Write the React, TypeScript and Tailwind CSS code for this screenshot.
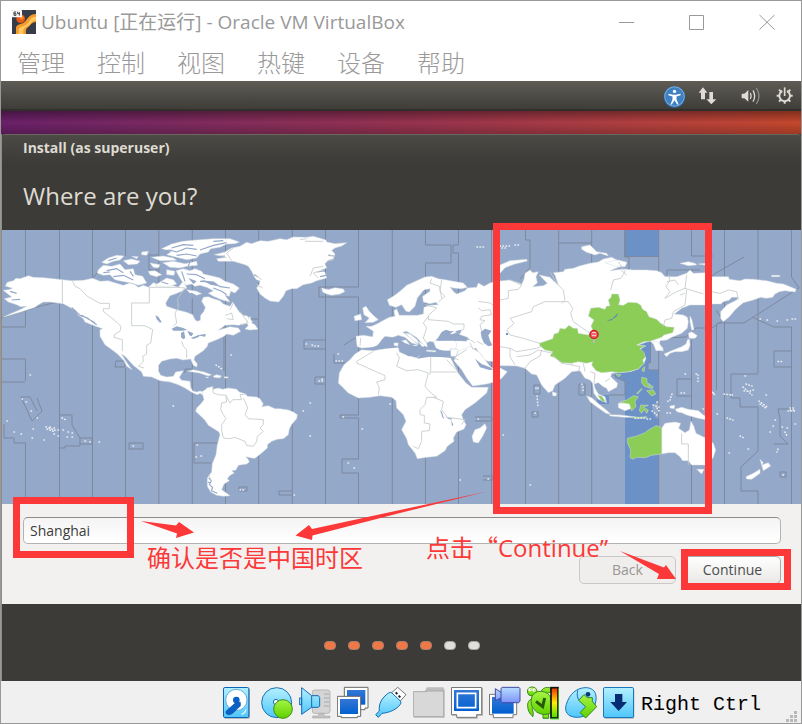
import React from "react";

const uiFont = "font-['Open_Sans','Noto_Sans_CJK_SC',sans-serif]";
const menuFont = "font-['Noto_Sans_CJK_SC',sans-serif]";

const zoneLines = [
  "M25.5 230V327M25.5 327H2M2 359H25.5V381M2 382H25M25.5 443V504M25.5 443H14V438H4V424",
  "M59.5 230V504M92.5 230V278M92.5 290V504M125.5 230V256M125.5 368V504",
  "M158.8 230V504M192.3 230V504M225.5 230V504M258.7 230V504M292.3 230V504M325.5 230V504",
  "M358.5 230V287H319V297H358.5V415H340V418H358.5V459H342V473H358.5V504",
  "M325.5 340H304V349H325.5M325.5 377H315V384H325.5M292 491H279V495H292",
  "M392.3 230V504M425.5 230V245H451V263H425.5V504M458.5 230V245H453V253H458.5V504M491.5 230V504",
  "M525.5 230V240H530V268L520 279M525.5 330V504M558.7 230V504M591.7 230V243H558.7M591.7 243V504",
  "M624.7 230V257H629V270M658.7 230V256M691.5 230V256H713M667 275V270H700M658.7 256V504M691.5 340V504M677 379H691.5M677 379V396H691.5",
  "M724.5 230V504M716.5 324V390M758 230V373M731 374H758M731 374V398H740V407H758V451L741 467V491H758V504",
  "M791.5 230V277L799 288L744 323H717M791.5 327V504M774 327L752 317M791.5 327H774M774 351H791.5M774 351V367H791.5M667 338L686 337L696 328H712L722 321",
  "M2 318C30 309 42 305 59 302M37 398L42 411L32 421L21 397V397H30L37 411M60 415H72V425L80 438V446H65V448H60M80 438H92V444H80",
  "M158.8 255H149V270H158M115 367H125V361H116ZM129 443H143V449H129ZM194 443H219M194 443V463H211M239 487H247V491H239ZM224 371V319H258M185 369H192M185 369V373M102 267L92 279M344 345L358 336M334 354V363H345",
  "M475 417H492V421H475M483 476H493V480H483M534 385H540V394H534ZM579 384H585V395H579ZM532 412H538V417H532ZM609 395H625V381L613 375",
  "M774 444H788L780 436V419L778 409H792M702 284L716 273L744 257M716 310L723 321M780 472H786V477H780Z",
];

const origins = { a: [0, 228], b: [180, 228], c: [330, 228], d: [490, 220], e: [620, 220] };
type Region = keyof typeof origins;

function place(at: Region) {
  return `translate(${origins[at][0]} ${origins[at][1]}) scale(0.33333)`;
}

function Land({ d, at, fill = "#ffffff" }: { d: string; at: Region; fill?: string }) {
  return <path d={d} transform={place(at)} fill={fill} stroke="#d5dde0" strokeWidth="1.5" strokeLinejoin="round" />;
}

function Borders({ d, at }: { d: string; at: Region }) {
  return <path d={d} transform={place(at)} fill="none" stroke="#c3cac9" strokeWidth="2.5" strokeLinejoin="round" />;
}

const sea = "#94a8c9";
const zone = "#6c91c7";
const green = "#8ccd58";

function Inlets({ d, at }: { d: string; at: Region }) {
  return <path d={d} transform={place(at)} fill="none" stroke={sea} strokeWidth="3.5" strokeLinejoin="round" />;
}

function WorldMap() {
  return (
    <svg viewBox="2 230 799 274" className="block w-full" role="img" aria-label="Time zone map">
      <rect x="2" y="230" width="799" height="274" fill={sea} />
      <rect x="625" y="230" width="34" height="26.5" fill={zone} />
      <path d="M650.5 342V363H648V370H658.7V400L652 407L655 417L658.7 419V504H625V382L615 378V372L625 345ZM597 395H609V404H597Z" fill={zone} />
      <g fill="none" stroke="#7d899e" strokeWidth="1">
        {zoneLines.map((d) => (
          <path key={d} d={d} />
        ))}
        <path d="M625 230V256.500H658.500M650.500 342V363H648V370H658.700" />
      </g>

      {/* North and Central America */}
      <Land at="a" d="M10 187L25 185L38 181L16 174L22 163L40 158L48 151L60 152L85 143L100 148L130 149L160 152L187 155L215 158L250 157L278 151L300 160L325 158L340 163L370 172L390 165L405 170L415 178L430 172L445 178L460 164L480 172L510 170L535 178L545 165L550 158L560 180L545 190L525 198L510 203L497 225L500 235L530 245L560 253L578 260L585 275L592 280L601 277L602 262L612 250L616 238L605 220L610 208L625 206L640 212L660 218L670 228L690 235L698 222L710 240L718 252L730 262L742 264L752 275L758 282L738 287L715 292L700 290L675 292L655 307L690 296L715 300L722 310L700 322L680 318L672 325L650 335L625 345L622 355L610 368L585 385L582 395L592 408L590 417L580 412L572 393L550 396L530 391L510 393L485 400L476 412L476 430L482 442L500 447L520 445L527 432L550 428L538 448L545 457L570 460L572 478L578 489L590 492L600 489L612 493L620 480L640 476L630 500L610 502L600 496L592 500L575 493L555 480L535 470L510 462L480 458L455 447L430 445L425 432L400 412L375 385L364 378L378 400L396 425L380 415L372 398L355 380L345 372L315 350L300 325L300 305L308 302L275 290L255 282L250 272L235 262L228 248L213 240L190 227L150 222L130 222L115 230L105 238L80 246L62 252L10 268L30 258L60 245L80 235L62 236L50 230L25 222L13 212L35 207L20 195Z" />
      <Land at="a" d="M738 285L750 265L755 285L765 290L774 304L750 306L735 303L745 292ZM295 125L310 112L335 115L360 108L375 125L400 122L405 140L428 145L440 165L415 172L395 165L365 160L345 155L330 140L310 142L292 135ZM305 103L325 90L350 82L372 84L360 96L340 100L320 108ZM370 98L395 93L420 100L412 108L385 110ZM425 72L445 70L440 82L425 80ZM395 85L415 86L410 92ZM450 105L480 110L475 120L460 118ZM445 130L465 128L485 140L470 146L450 140ZM488 104L520 100L555 107L590 100L592 112L560 115L540 120L510 118ZM500 125L525 130L522 142L500 140ZM455 88L490 84L520 90L530 97L480 98ZM485 62L515 48L548 40L590 36L640 32L690 32L718 42L705 47L680 48L660 58L632 62L625 72L600 78L590 90L560 95L530 88L500 80L515 70ZM528 128L550 122L570 128L585 122L605 130L610 138L640 145L660 150L675 160L700 168L718 180L705 195L692 190L688 205L675 202L690 222L665 215L640 205L625 196L640 188L620 178L600 172L585 175L575 168L558 172L545 158L535 142ZM560 185L590 190L605 197L585 203L570 196ZM465 172L500 150L520 155L530 168L500 178Z" />
      <Inlets at="a" d="M485 70L510 66L530 72L560 60L590 64M515 60L550 50L580 52M530 82L560 78L590 84M600 66L640 52L680 44M640 40L670 38M320 128L350 122L370 134M340 146L370 142L400 156M390 130L400 145M310 134L330 132M325 98L350 90M560 138L590 140L615 152M600 160L640 162L660 176L690 180M640 180L665 190L680 200M545 130L555 160M570 100L565 115M485 162L505 168M30 190L50 196M35 216L60 214M215 238L240 262L262 270L290 290M245 262L285 284" />
      <Borders at="a" d="M187 155V225M218 160L225 175L240 182L262 205L300 226H328V242H310V250L345 278L363 295L360 310L345 318L342 328L367 335V370M448 178V225H395V293H435L458 305L452 345L440 352V378L428 385L430 400L415 415L432 420M530 178L555 180L533 212L535 240L525 255L530 285L520 295M545 340L550 355L560 365V390M675 262L695 255L700 275L680 272M700 225L690 245M720 250L745 285L720 290M448 178H530" />
      <path
        fill={sea}
        transform={place("a")}
        d="M466 262L475 266L485 282L480 284L470 274ZM515 302L530 295L550 300L562 306L545 308L520 308ZM543 315L552 310L556 330L550 334L543 328ZM562 308L580 316L575 325L568 322ZM572 330L595 322L598 326L580 333ZM590 322L618 318L615 326ZM560 200L575 194L590 202L575 212ZM602 155L640 162L655 175L632 170ZM565 150L590 160L580 168Z"
      />
      <Land at="a" d="M563 430L580 425L612 432L635 440L625 444L598 435ZM640 444L650 440L665 444L658 450L642 448ZM616 448L625 447L624 450ZM673 446L685 447L684 450L673 450Z" />

      {/* Greenland, Iceland */}
      <Land at="b" d="M103 80L135 72L155 60L180 55L200 43L215 47L240 38L265 40L300 32L320 35L340 27L380 28L400 25L438 36L440 42L465 47L500 44L485 54L465 60L455 67L465 78L460 92L445 97L435 107L440 120L425 125L435 133L440 150L410 158L395 165L370 170L350 182L335 182L318 188L310 205L296 222L270 219L255 210L240 198L230 180L240 165L225 150L215 130L205 115L195 110L160 100L115 100L110 92L140 88L120 84ZM425 180L445 185L465 179L490 183L494 191L480 198L455 202L440 198L428 192Z" />
      <Inlets at="b" d="M445 82L462 84M442 104L460 98M412 132L435 128M420 146L438 142M222 140L234 146M228 158L240 160M105 86L135 84" />
      <Borders at="b" d="M160 60L140 75L155 98M375 40H430M360 35L380 32M390 145L400 120L430 115M415 150L400 135L435 125M445 80L465 85M440 100L462 95M225 140L245 155M230 170L248 180" />
      {/* South America */}
      <Land at="b" d="M68 490L82 482L95 476L100 484L115 480L128 484L145 480L170 484L178 492L195 497L203 505L230 507L240 512L250 528L245 536L265 533L285 542L300 542L325 546L340 552L352 560L350 572L336 588L328 602L325 620L310 632L292 634L275 640L262 650L262 660L245 675L225 691L215 690L198 686L205 695L208 702L200 708L175 712L168 726L155 728L163 735L150 742L142 752L148 758L132 768L125 785L138 794L150 803L130 805L110 802L92 792L82 775L82 750L95 732L97 707L108 680L112 650L120 620L117 612L85 592L75 577L58 560L47 550L50 540L62 528L72 515L68 500Z" />
      <Inlets at="b" d="M86 750L94 758L88 770L98 778L94 788L112 796M84 762L92 766" />
      <Borders at="b" d="M98 482L100 495L115 500L138 502L140 522L125 525L122 545L130 560L138 572L125 590V608L130 630L150 632L165 628L195 640L200 652L220 655L230 640L232 625L250 610L240 600L250 590V575L205 572L195 560L203 540L195 520L190 510M138 502L150 525L158 515L185 515L180 500L200 498M85 740L95 760" />

      {/* Europe and Africa */}
      <Land at="c" d="M78 325L100 322L128 326L130 310L108 295L125 295L145 286L155 280L178 268L195 265L192 248L200 243L208 262L235 262L262 262L280 258L282 238L300 232L325 230L318 223L300 227L280 222L278 205L300 190L300 182L282 185L262 210L255 235L238 252L228 250L215 230L198 238L178 232L172 215L190 205L210 190L230 172L260 158L285 147L305 145L325 152L345 155L370 160L400 165L412 178L395 182L370 180L360 177L372 192L380 198L405 188L412 180L440 178L445 165L462 175L480 165L500 160V400H475L462 395L455 380L445 372L438 360L420 365L408 378L385 372L378 362L355 368L325 363L318 350L325 340L355 340L378 338L410 340L412 328L385 318L392 308L375 315L362 320L350 308L340 312L330 325L318 335L322 345L300 340L290 345L292 358L280 352L262 330L230 310L218 312L240 330L265 350L245 345L225 328L205 322L188 328L165 325L155 335L148 350L128 358L95 360L82 356L80 345Z" />
      <Land at="c" d="M98 240L108 235L118 250L130 262L145 275L130 283L105 284L118 270L102 260ZM72 265L92 258L95 275L75 278ZM310 340L325 338L370 335L380 345L378 362L340 370L318 360ZM262 338L285 352L278 358ZM248 352L262 350L258 358ZM362 360L385 365L378 385L362 385ZM385 370L420 355L450 375L465 395L480 415L500 430V460L470 468L428 474L410 450L395 425L372 398Z" />
      <Land at="c" d="M75 378L95 365L130 368L165 362L205 358L208 372L230 382L262 390L270 380L300 386L330 386L362 390L372 410L388 440L408 465L425 478L475 478L470 495L435 525L405 545L395 560L400 575L408 590L402 603L380 612L370 630L372 640L352 655L345 668L320 685L290 688L262 692L255 675L235 650L230 632L215 605L220 595L228 580L220 560L200 540L198 518L185 508L150 503L120 508L85 510L55 495L38 478L25 465L28 435L42 410L60 395ZM465 587L470 600L458 625L445 645L430 642L426 625L435 605L450 600Z" />
      <path
        transform={place("c")}
        fill={sea}
        d="M325 328L335 312L348 305L362 310L372 308L360 318L380 322L410 328L418 335L385 338L350 338L325 338ZM375 310L395 305L390 318ZM452 312L465 302L485 308L475 322L480 338L488 352L475 355L462 345L455 330ZM435 392L455 408L480 418L490 425L478 426L450 418ZM330 545L338 570L342 572L336 552ZM345 568L368 572L362 575ZM363 575L370 590L366 595ZM92 366L130 364L205 358L235 385L270 380L262 392L300 386L362 388L360 370L320 365L290 358L240 352L190 330L155 337L140 355Z"
      />
      <Land at="c" d="M225 315L242 332L265 348L262 335L240 318ZM215 338L228 336L240 350L225 345ZM192 345L205 345L203 355L192 352ZM290 366L318 368L316 372L290 370Z" />
      <Borders at="c" d="M80 400V405L165 443V455L140 462L148 480L145 500M80 400L130 370M200 375L208 390L200 415L230 428L265 425L295 435L285 475L300 492L320 508H290L285 530L270 545V560L283 562V585L300 588L298 608L275 610V640L265 662L250 655M302 388V432H385L350 395M300 432V440M310 508L340 520L335 545L352 568L405 575L395 590M305 153L300 165L328 175L335 210M335 155L330 190L345 205L325 222M285 230L320 240L295 262L295 275L355 280L370 288H402V302L390 312M295 265L280 285L290 300L280 330L290 345M445 220L480 225L500 240M445 240L455 248L480 245L485 260L455 265L450 275L465 278L450 290L455 310M410 328L435 345M440 340L460 350M92 330L90 355M420 345L430 365M385 395L370 390L410 365" />

      {/* Asia */}
      <Land at="d" d="M15 185L30 183L60 180L85 188L95 193L102 178L105 160L120 150L128 158L145 155L138 170L142 188L128 200L160 197L172 190L148 165L180 172L190 182L205 195L195 165L190 158L220 155L225 148L250 145L268 138L300 130L325 126L340 117L365 112L385 122L410 126L408 135L385 142L360 152L400 147L430 150L470 150L500 152L515 158L525 170L560 170L590 160L600 150L610 160L645 158L665 170L715 170L718 178L750 182L765 177L790 178L830 182L860 190L880 192L900 200L919 208L915 216L885 212L868 215L855 222L848 232L828 235L812 232L790 240L760 248L748 258L735 270L718 290L700 305L692 295L692 275L710 255L740 240L745 232L725 232L718 240L700 245L692 252L660 252L645 255L600 255L575 265L553 282L580 285L592 292L595 305L592 325L575 340L545 352L530 360L510 362L508 378L518 382L520 393L500 390L500 375L490 372L480 362L445 375L465 378L450 388L468 415L462 430L445 447L420 455L385 458L365 460L362 470L383 490L380 502L355 515L350 505L340 500L325 488L312 492L315 505L325 522L345 530L350 548L325 538L312 520L308 490L300 480L285 475L270 452L245 455L225 475L195 495L188 512L175 518L155 495L140 465L125 462L105 445L80 438L30 437L15 433ZM25 441L52 455L35 475L15 486ZM187 515L200 520L198 528L188 527ZM275 80L300 75L320 95L350 100L355 108L330 100L315 105L290 97L275 88ZM30 135L60 122L110 118L112 123L75 132L45 143L30 160L15 165ZM290 528L305 533L330 555L355 575L362 583L348 580L320 560L300 545ZM358 584L390 585L415 588L440 592L405 592L360 588ZM385 550L420 548L425 565L405 572L385 563Z" />
      <Land at="e" d="M180 130L205 125L225 130L230 135L205 137ZM235 132L262 130L260 136ZM455 166L480 166L478 170L455 170ZM-45 128L-5 120L20 128L15 140L-15 138ZM210 288L216 300L222 330L215 330L210 305ZM205 340L215 335L232 347L225 355L208 355ZM208 358L210 375L205 390L185 395L165 395L150 400L140 410L132 402L165 388L185 380L198 372L203 358ZM98 365L110 365L122 375L128 390L108 392ZM150 558L165 556L162 566L150 564ZM165 568L185 562L205 568L235 572L250 585L262 592L262 600L235 595L200 585L185 578L172 576ZM125 625L135 610L165 606L182 610L176 625L195 638L208 630L213 603L222 620L228 640L258 655L280 670L287 690L280 712L262 735L215 735L205 722L188 722L180 710L165 698L145 698L125 702ZM230 748L252 748L245 762ZM378 770L400 760L420 748L420 760L395 778L380 777ZM425 735L445 728L452 738L430 752ZM420 718L430 728L425 735Z" />
      <Land at="d" fill={green} d="M148 370L165 364L188 356L192 342L205 338L210 325L225 327L237 316L250 325L262 325L265 340L295 345L308 330L303 318L312 300L295 288L302 265L325 262L345 268L350 258L360 258L355 240L363 232L365 222L385 222L390 240L386 254L400 256L415 247L440 248L452 255L458 268L470 275L477 290L500 298L512 310L530 320L553 322L548 338L522 345L515 352L480 364L462 365L440 375L468 378L450 385L462 398L466 412L458 420L462 430L445 447L415 455L385 458L365 455L335 458L318 452L305 435L308 425L290 430L265 425L245 430L215 428L192 412L180 408L188 395L165 390L150 378ZM378 463L393 464L386 471ZM458 445L465 440L462 455L456 452ZM323 526L335 528L347 545L335 543ZM388 547L410 540L430 527L445 530L435 545L438 560L425 573L418 552ZM455 472L470 475L472 490L480 505L462 498L455 488ZM475 490L490 500L485 508ZM470 512L490 510L497 522L485 528ZM452 555L475 556L460 562L475 570L470 580L462 568L455 580L448 572ZM440 520L455 505L456 508L443 522ZM418 590L445 592L470 590L470 593L440 596Z" />
      <Land at="e" fill={green} d="M22 655L50 648L75 638L85 630L100 622L108 617L120 620L125 625V702L95 706L75 713L50 712L38 718L30 712L32 690L22 668Z" />
      <Borders at="d" d="M60 180L95 195L85 208L55 212V235L30 240M180 155L200 190L220 210L225 240L215 250M60 295L125 275L130 260L165 245L235 245L248 265L242 280L250 305L300 340M60 295L72 310L50 330L60 345L100 355L150 370M30 380L60 385L80 395L140 385L155 378M60 385V410L75 435M80 410L120 405L145 390L188 400M105 445L120 425L150 408L155 390M188 405L215 430L245 435L245 430M245 435L270 440L265 455M280 430L285 455M385 125L405 155L392 175L370 180L362 210M392 150L410 165M535 165L540 180L528 200L540 215L525 235L560 215L585 205L590 165M585 205L640 222M590 210L585 255L550 275L545 295L525 300L520 320M300 455L315 460L312 490M360 475L345 485" />
      <Borders at="e" d="M275 215L300 220L325 210L350 215L355 240M185 640V672H205V735M140 185L165 180L175 195M180 225L195 220" />
      <path d="M606.500 320.500L612 319L618 313L617 316L611 320.500Z" fill="#5f83bd" />
      <path d="M506 333h2v2h-2Z" fill={zone} />

      {/* Small islands */}
      <g fill="none" stroke="#eff2f2" strokeWidth="1.500" strokeLinecap="round" strokeDasharray="0.500 2.500">
        <path d="M22 399h0.500M26 402h0.500M31 411h0.500M37 418h0.500M7 421h1M14 432h0.500M21 434h0.500M32 438h0.500M44 440h0.500M30 375h0.500M33 429h1M46 427h0.500M50 427l2 2M54 428h2M58 430h2M54 434h0.500M58 436h0.500M63 430h1M68 432h1M67 437h0.500M72 437h1M72 433h0.500M62 418l4 2M85 441h1M90 442h0.500M99 442h0.500M133 446h0.500M173 406h0.500M231 355h0.500M197 445h1M196 457h0.500M201 456h0.500M240 490h6M294 495h0.500M49 428l8 3M47 429l8 3" />
        <path d="M306 344h0.500M312 345l3 1M318 346h0.500M338 354h0.500M336 361h7M319 381h6M322 379v3M303 411h0.500M310 403h0.500M310 436h1M343 417h0.500M362 429h0.500M348 463h0.500M354 468h0.500M460 480h0.500M478 419h0.500M488 479h0.500M503 435h0.500M390 404h0.500M216 365l6 4" />
        <path d="M477 247h8M500 246h10M502 248h4M515 245h4M536 388v3M538 388v2M537 396l1 11M583 387v6M582 384v2M535 413h1M530 485h1M635 418h10M647 419h6M668 401v0.500M672 394l-2 6M681 393h6M698 375v8M696 374h2M685 374h0.500M710 393h4M732 395h1M745 376h0.500M743 387l9 8M746 384l6 2M744 391h7M753 390h0.500M759 401l8 6M760 404l7 5M766 395h2M760 319h0.500M767 320h2M777 321h3M787 320h3M792 319h5M788 411h7M790 408h5M775 420h0.500M773 426h0.500M770 432h2M782 427h2M785 432l2 4M787 428h2M795 424h0.500M778 449l-1 3M729 453h0.500M748 449h0.500M740 436l4 2M717 414h1M727 418l6 2M703 409h2M667 413h4M657 402h2M657 408l2 3M790 410h4M783 475h1M712 392l3 3M724 394l8 1M653 405l6 2M652 411l5 4" />
        <path d="M778 361.500h4" />
      </g>
      <path d="M594 339V343" stroke="#b6bbb5" strokeWidth="2" />
      <circle cx="594" cy="334.500" r="4" fill="#ef6a6c" stroke="#cf2127" strokeWidth="1.500" />
      <path d="M592 332.500H596M592 335.500H596" stroke="#f9c4c4" strokeWidth="1" />
    </svg>
  );
}

function UbuntuIcon() {
  return (
    <svg viewBox="36 30 72 72" className="h-6 w-6">
      <rect x="36" y="30" width="72" height="72" fill="#363c48" />
      <path d="M48 102V86C48 74 58 74 68 70C82 64 82 42 108 42V66C92 68 92 76 84 82C76 88 78 94 78 102Z" fill="#f79a2c" />
      <path d="M56 102V88C60 78 80 80 88 64C92 54 98 50 108 50V60C94 62 92 76 80 80C68 85 70 92 70 102Z" fill="#ffc95e" />
      <circle cx="62" cy="56" r="13" fill="#ea5a12" />
      <circle cx="65" cy="53" r="6" fill="#ff8a2a" />
      <rect x="36" y="30" width="30" height="22" rx="2" fill="#f8f8f8" />
      <path d="M48 36H42V46H48V41H42M53 35V41H59M58 36V47" fill="none" stroke="#444" strokeWidth="3" />
    </svg>
  );
}

function TrayIcons() {
  return (
    <div className="flex h-full items-center pt-0.5 text-[#dfdbd2]">
      <svg viewBox="788 252 68 68" className="h-[23px] w-[23px]" role="img" aria-label="Accessibility">
        <circle cx="822" cy="288" r="32" fill="#2c5f93" />
        <circle cx="822" cy="286" r="29" fill="#3f80c0" stroke="#79abdc" strokeWidth="3" />
        <circle cx="822" cy="271" r="5" fill="#fff" />
        <path d="M804 278L818 281H826L840 278V282L828 286V295L834 310H830L822 297L814 310H810L816 295V286L804 282Z" fill="#fff" />
      </svg>
      <svg viewBox="896 260 60 60" className="ml-3 h-5 w-5" role="img" aria-label="Network" fill="currentColor">
        <path d="M898 280L911 264L924 280H917V300H905V280ZM921 300H930V278H941V300H951L936 315Z" />
      </svg>
      <svg viewBox="1024 260 60 60" className="ml-[23px] h-5 w-5" role="img" aria-label="Sound">
        <path d="M1026 283H1034L1046 272V307L1034 297H1026Z" fill="currentColor" />
        <path d="M1052 281Q1057 290 1052 299M1060 273Q1070 290 1060 307" fill="none" stroke="currentColor" strokeWidth="4" />
        <path d="M1070 266Q1086 290 1070 314" fill="none" stroke="#908e87" strokeWidth="4" />
      </svg>
      <svg viewBox="1126 260 60 60" className="ml-[14px] h-5 w-5" role="img" aria-label="Session" fill="none" stroke="currentColor">
        <path d="M1148 275A16 16 0 1 0 1162 275" strokeWidth="6" />
        <path d="M1155 264V290" strokeWidth="5" />
        <path d="M1131 289H1138M1172 289H1179M1138 271L1144 277M1172 271L1166 277M1138 307L1144 301M1172 307L1166 301M1155 305V313" strokeWidth="6" />
      </svg>
    </div>
  );
}

function StatusIcon({ box, label, children }: { box: string; label: string; children: React.ReactNode }) {
  return (
    <button type="button" aria-label={label} className="h-[34px] w-8 shrink-0">
      <svg viewBox={box} className="h-[34px] w-8">
        {children}
      </svg>
    </button>
  );
}

function StatusIcons() {
  return (
    <div className="flex gap-1.5">
      <svg className="absolute h-0 w-0" aria-hidden="true">
        <defs>
          <linearGradient id="aqua" x1="0" y1="0" x2="0" y2="1">
            <stop offset="0" stopColor="#b4f0ff" />
            <stop offset="1" stopColor="#4fc6fa" />
          </linearGradient>
          <linearGradient id="lime" x1="0" y1="0" x2="0" y2="1">
            <stop offset="0" stopColor="#a6f545" />
            <stop offset="1" stopColor="#5fd000" />
          </linearGradient>
          <linearGradient id="blue" x1="0" y1="0" x2="0" y2="1">
            <stop offset="0" stopColor="#3577d5" />
            <stop offset="1" stopColor="#0060cf" />
          </linearGradient>
          <linearGradient id="heat" x1="0" y1="0" x2="0" y2="1">
            <stop offset="0" stopColor="#f32d00" />
            <stop offset="0.500" stopColor="#ffee00" />
            <stop offset="1" stopColor="#43e000" />
          </linearGradient>
          <linearGradient id="violet" x1="0" y1="0" x2="0" y2="1">
            <stop offset="0" stopColor="#b8dcff" />
            <stop offset="1" stopColor="#7d93fa" />
          </linearGradient>
        </defs>
      </svg>
      <StatusIcon box="39 168 96 102" label="Hard disks">
        <rect x="42" y="175" width="78" height="91" rx="5" fill="#aaa" />
        <rect x="40.500" y="172.500" width="76" height="90" rx="4" fill="url(#aqua)" stroke="#0a64b8" strokeWidth="3" />
        <circle cx="79" cy="210" r="32" fill="#fff" stroke="#5eaede" strokeWidth="3" />
        <circle cx="79" cy="210" r="10" fill="#0a62c8" />
        <path d="M48 250Q46 244 52 240L76 219L91 217V228L68 250Q55 258 48 250Z" fill="#0a62c8" stroke="#0a4da0" strokeWidth="2" />
        <path d="M94 253Q106 250 108 238" fill="none" stroke="#d4f7ff" strokeWidth="4" />
      </StatusIcon>
      <StatusIcon box="153 168 96 102" label="Optical drives">
        <circle cx="200" cy="218" r="45" fill="url(#aqua)" stroke="#1871b6" strokeWidth="3" />
        <circle cx="198" cy="216" r="8" fill="#fff" stroke="#1871b6" strokeWidth="3" />
        <circle cx="219" cy="237" r="28" fill="url(#lime)" stroke="#3d8c15" strokeWidth="3" />
      </StatusIcon>
      <StatusIcon box="267 168 96 102" label="Audio">
        <rect x="307" y="180" width="53" height="70" rx="7" fill="#d5d5d5" stroke="#b5b5b5" strokeWidth="3" />
        <path d="M326 250V258H308V264H360V258H342V250Z" stroke="#aaa" strokeWidth="2" fill="#c3c3c3" />
        <path d="M342 192H358M342 204H358M342 216H358M342 228H358" stroke="#aaa" strokeWidth="3" fill="none" />
        <path d="M275 173L305 197H325L329 202V228L325 232H305L275 253ZM268 204H275V224H268Z" fill="url(#aqua)" stroke="#1668b1" strokeWidth="3" strokeLinejoin="round" />
        <path d="M305 198V232" stroke="#1668b1" strokeWidth="3" />
      </StatusIcon>
      <StatusIcon box="381 168 96 102" label="Network">
        <path d="M403 172H474V234H465V239H414V234H403Z" fill="#fff" stroke="#686868" strokeWidth="3" />
        <rect x="411" y="180" width="55" height="44" fill="url(#blue)" />
        <path d="M382 199H452V259H442V263H394V259H382Z" fill="#fff" stroke="#686868" strokeWidth="3" />
        <rect x="390" y="207" width="54" height="45" fill="url(#blue)" />
      </StatusIcon>
      <StatusIcon box="495 168 96 102" label="USB devices">
        <path d="M543 190L563 172L588 194L570 214Z" fill="#fff" stroke="#777" strokeWidth="3" />
        <path d="M557 187l5 5M566 197l5 5" stroke="#222" strokeWidth="6" />
        <path d="M536 189Q541 185 546 189L571 213Q575 218 571 223C560 238 540 248 516 250L505 262L497 254L508 243C506 222 514 204 536 189Z" fill="url(#aqua)" stroke="#146bb5" strokeWidth="3" strokeLinejoin="round" />
      </StatusIcon>
      <StatusIcon box="609 168 96 102" label="Shared folders">
        <path d="M612 187H642L651 172H700L704 180V263H612Z" fill="#bcbcbc" />
        <path d="M610 185H646L654 183H701V260H610Z" fill="#d8d8d8" stroke="#aaa" strokeWidth="3" />
      </StatusIcon>
      <StatusIcon box="33 168 96 102" label="Display">
        <path d="M36 175H129V257H113V266H52V257H36Z" fill="#b4b4b4" />
        <path d="M34.500 172.500H125V254H110V262H50V254H34.500Z" fill="#fff" stroke="#777" strokeWidth="3" />
        <rect x="42" y="180" width="75" height="63" fill="url(#blue)" />
        <path d="M52 190H107V233H52Z" fill="none" stroke="#fff" strokeWidth="5" />
      </StatusIcon>
      <StatusIcon box="147 168 96 102" label="Recording">
        <path d="M148.500 193H230V254H219V263H160V254H148.500Z" fill="#fff" stroke="#777" strokeWidth="3" />
        <path d="M156 201H221V251H156Z" fill="url(#blue)" />
        <path d="M166 176L183 187V175L187 172H237L240 176V214L236 218H187L183 214V204L166 212Z" fill="url(#violet)" stroke="#414aa3" strokeWidth="3" />
        <path d="M183 187V204" stroke="#414aa3" strokeWidth="3" />
      </StatusIcon>
      <StatusIcon box="261 168 96 102" label="Features">
        <g fill="url(#lime)" stroke="#3d8d1c" strokeWidth="3" strokeLinejoin="round">
          <path d="M282 206Q266 206 263 222Q261 246 279 260Q282 246 276 236L284 226Z" />
          <path d="M304 182Q314 168 332 174V186L316 192Z" />
          <path d="M309 252H326V265H309Z" />
          <path d="M276 198Q264 198 262 186Q262 172 275 171Q290 171 291 184L290 196Z" />
          <path d="M276 198Q290 178 314 186Q334 194 334 214V248Q312 260 290 246Q266 228 276 198Z" />
        </g>
        <circle cx="270" cy="179" r="5" fill="#fff" />
        <circle cx="282" cy="180" r="5" fill="#fff" />
        <path d="M270 179h1M282 180h1" stroke="#222" strokeWidth="3" />
        <path d="M288 214L308 230L314 204" fill="none" stroke="#275908" strokeWidth="9" />
        <rect x="333" y="173" width="21" height="91" fill="url(#heat)" stroke="#111" strokeWidth="5" />
        <path d="M332 267H357V174" fill="none" stroke="#49ed25" strokeWidth="3" />
      </StatusIcon>
      <StatusIcon box="375 168 96 102" label="Mouse integration">
        <path d="M412 262C382 262 372 244 379 223C388 192 410 174 435 173C459 172 471 187 468 211C465 239 442 262 412 262Z" fill="url(#aqua)" stroke="#1674b9" strokeWidth="3" />
        <path d="M413 181Q408 203 421 215" fill="none" stroke="#1674b9" strokeWidth="3" />
        <path d="M416 211L432 194L442 203H457V214L470 230L437 264L420 248L437 230Z" fill="url(#lime)" stroke="#328629" strokeWidth="3" strokeLinejoin="round" />
        <circle cx="444" cy="193" r="7" fill="#073b77" />
      </StatusIcon>
      <StatusIcon box="489 168 96 102" label="Keyboard capture">
        <rect x="492" y="175" width="91" height="91" rx="4" fill="#b0b0b0" />
        <rect x="490.500" y="172.500" width="90" height="90" rx="4" fill="url(#aqua)" stroke="#1a76bb" strokeWidth="3" />
        <path d="M525 192H547V216H561L536 243L511 216H525Z" fill="#062c73" />
      </StatusIcon>
    </div>
  );
}

function Annotations() {
  return (
    <div className="pointer-events-none absolute -inset-px overflow-hidden text-2xl leading-9 text-[#fc3838]">
      <div className="absolute left-[13px] top-[497px] h-[61px] w-[121px] border-7 border-[#fc3838]" />
      <div className="absolute left-[493px] top-[223px] h-[291px] w-[219px] border-7 border-[#fc3838]" />
      <div className="absolute left-[681px] top-[549px] h-[41px] w-[110px] border-7 border-[#fc3838]" />
      <svg viewBox="0 0 802 724" className="absolute left-0 top-0 h-[724px] w-[802px]" fill="#fc3838">
        <path d="M141 521L176 525.500L179 522L194 532.500L176 538L177 533.500Z" />
        <path d="M487 491.500L400 510L312 529L309 525L295.500 535.500L312 540L312.500 535.500L400 513Z" />
        <path d="M620 551L664 567.500L666 565L676 579L657 579L659 574Z" />
      </svg>
      <p className={`absolute left-[147px] top-[539px] whitespace-nowrap ${menuFont}`}>确认是否是中国时区</p>
      <p className={`absolute left-[426px] top-[529px] whitespace-nowrap ${menuFont}`}>
        点击“<span className={uiFont}>Continue”</span>
      </p>
    </div>
  );
}

const steps = [true, true, true, true, true, false, false];

export default function App() {
  return (
    <div className={`relative flex min-h-screen flex-col border border-[#999999] bg-[#f0f0f0] ${uiFont}`}>
      <header className="bg-white text-[#999999]">
        <div className="flex h-[42px] items-center pl-[11px] pr-[26px]">
          <UbuntuIcon />
          <h1 className="ml-[5px] flex-1 whitespace-nowrap text-[19px] leading-6">Ubuntu [正在运行] - Oracle VM VirtualBox</h1>
          <div className="flex gap-[54px]">
            <button type="button" aria-label="Minimize" className="h-4 w-4">
              <svg viewBox="0 0 16 16" className="h-4 w-4" fill="none" stroke="currentColor">
                <path d="M0 8.500H15" />
              </svg>
            </button>
            <button type="button" aria-label="Maximize" className="h-4 w-4">
              <svg viewBox="0 0 16 16" className="h-4 w-4" fill="none" stroke="currentColor">
                <path d="M0.500 1.500H14.500V15.500H0.500Z" />
              </svg>
            </button>
            <button type="button" aria-label="Close" className="h-4 w-4">
              <svg viewBox="0 0 16 16" className="h-4 w-4" fill="none" stroke="currentColor">
                <path d="M0.500 1L15.500 15.500M15.500 1L0.500 15.500" />
              </svg>
            </button>
          </div>
        </div>
        <nav className={`flex h-[38px] items-center gap-8 pl-4 text-2xl leading-8 font-light ${menuFont}`}>
          {["管理", "控制", "视图", "热键", "设备", "帮助"].map((name) => (
            <button key={name} type="button" className="whitespace-nowrap">
              {name}
            </button>
          ))}
        </nav>
      </header>

      <main className="flex flex-1 flex-col bg-[#3c3b37]">
        <div className="flex h-[30px] justify-end border-b-2 border-[#302f2b] bg-linear-to-b from-[#5e5c55] to-[#3e3d38] pr-[6px]">
          <TrayIcons />
        </div>
        <div className="h-[23px] bg-linear-to-r from-[#6a2069] via-[#95324f] to-[#c4472c]">
          <div className="h-full bg-linear-to-b from-black/35 via-transparent to-black/20" />
        </div>
        <section className="flex flex-1 flex-col border-l border-[#8c8b88] bg-[#3c3b37]">
          <div className="h-[96px] rounded-t border-t border-[#69675f] bg-linear-to-b from-[#4b4a45] to-[#3c3b37] to-30% px-[21px] text-[#dfdbd2]">
            <p className="pt-[3px] text-sm leading-5 font-bold">Install (as superuser)</p>
            <h2 className="mt-5 text-2xl leading-9">Where are you?</h2>
          </div>
          <WorldMap />
          <form className="h-[100px] bg-[#f2f1f0] pl-[21px] pr-5 pt-[13px] text-[#4c4c4c]" onSubmit={(event) => event.preventDefault()}>
            <input
              type="text"
              aria-label="Location"
              defaultValue="Shanghai"
              className="block h-[27px] w-full rounded-[5px] border border-[#b4b3b0] border-t-[#8e8d8a] bg-linear-to-b from-[#f4f4f4] to-white px-1.5 text-sm text-[#3c3c3c]"
            />
            <div className="mt-3 flex justify-end gap-2">
              <button type="button" disabled className="h-7 w-[97px] rounded-[5px] border border-[#c9c8c6] bg-[#efeeed] text-sm text-[#999692]">
                Back
              </button>
              <button type="submit" className="h-7 w-[97px] rounded-[5px] border border-[#aaa9a6] bg-linear-to-b from-white to-[#e9e8e6] text-sm text-[#4c4c4c]">
                Continue
              </button>
            </div>
          </form>
          <div className="flex min-h-[77px] flex-1 justify-center gap-3 pt-[37px]">
            {steps.map((done, index) => (
              <span
                key={index}
                className={`h-[9px] w-3 rounded-[4px] border ${done ? "border-[#a9806b] bg-[#f07746]" : "border-[#a8a7a4] bg-[#e0dfdd]"}`}
              />
            ))}
          </div>
        </section>
      </main>

      <footer className="flex h-[42px] items-center justify-end bg-[#f0f0f0] pr-[3px] pt-0.5">
        <StatusIcons />
        <span className="ml-1.5 whitespace-nowrap pt-1 font-['Liberation_Mono',monospace] text-xl leading-6 text-black">Right Ctrl</span>
        <svg viewBox="0 0 12 12" className="ml-[25px] h-3 w-3 self-end" fill="#b9b9b9" aria-hidden="true">
          <path d="M0 8h3v3H0ZM4 8h3v3H4ZM8 8h3v3H8ZM4 4h3v3H4ZM8 4h3v3H8ZM8 0h3v3H8Z" />
        </svg>
      </footer>

      <Annotations />
    </div>
  );
}
